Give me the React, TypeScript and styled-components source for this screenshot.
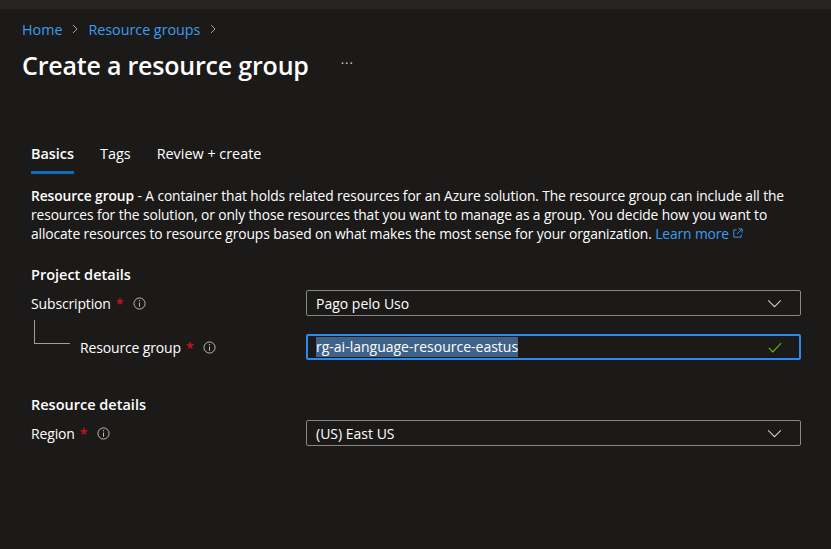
import React from 'react';
import styled, { createGlobalStyle } from 'styled-components';

const GlobalStyle = createGlobalStyle`
  html, body {
    margin: 0;
    padding: 0;
    background: #1b1a19;
  }
  body {
    font-family: "Open Sans", "Noto Sans", sans-serif;
    color: #ffffff;
    -webkit-font-smoothing: antialiased;
  }
`;

const Page = styled.div`
  width: 831px;
  height: 549px;
  background: #1b1a19;
  overflow: hidden;
`;

const TopBand = styled.div`
  height: 9px;
  background: #252423;
`;

const Header = styled.header`
  padding: 10px 22px 0;
`;

const Breadcrumb = styled.nav`
  display: flex;
  align-items: center;
  gap: 9px;
  font-size: 14.3px;
  height: 20px;
`;

const Crumb = styled.a`
  color: #3c9df0;
  text-decoration: none;
`;

const Sep = styled.svg`
  width: 8px;
  height: 10px;
`;

const TitleRow = styled.div`
  display: flex;
  align-items: center;
  margin-top: 9px;
`;

const Title = styled.h1`
  margin: 0;
  font-size: 25px;
  font-weight: 600;
  letter-spacing: -0.2px;
  line-height: 34px;
`;

const More = styled.span`
  margin-left: 32px;
  font-size: 13px;
  letter-spacing: 1px;
  color: #d0d0d0;
  line-height: 10px;
  padding-bottom: 4px;
`;

const Body = styled.main`
  padding: 62px 30px 0 31px;
`;

const Tabs = styled.div`
  display: flex;
  gap: 26px;
`;

const Tab = styled.div<{ $active?: boolean }>`
  font-size: 14.4px;
  font-weight: ${p => (p.$active ? 600 : 400)};
  padding-bottom: 7px;
  border-bottom: 3px solid ${p => (p.$active ? '#0f6cbd' : 'transparent')};
  line-height: 20px;
`;

const Description = styled.p`
  margin: 12px 0 0;
  font-size: 13.8px;
  line-height: 19px;
  width: 758px;
  letter-spacing: -0.1px;
`;

const Bold = styled.b`
  font-weight: 600;
`;

const Link = styled.a`
  color: #3c9df0;
  text-decoration: none;
  white-space: nowrap;
`;

const Section = styled.h2`
  margin: 0;
  font-size: 14.5px;
  font-weight: 600;
  line-height: 20px;
`;

const ProjectSection = styled(Section)`
  margin-top: 22px;
`;

const ResourceSection = styled(Section)`
  margin-top: 35px;
`;

const Form = styled.div`
  display: grid;
  grid-template-columns: 275px 495px;
  row-gap: 18px;
  margin-top: 5px;
`;

const LabelCell = styled.div`
  display: flex;
  align-items: center;
  font-size: 14px;
  height: 26px;
  letter-spacing: -0.15px;
`;

const Connector = styled.span`
  align-self: flex-start;
  width: 36px;
  height: 24px;
  margin: -14px 10px 0 3px;
  border-left: 1px solid #a19f9d;
  border-bottom: 1px solid #a19f9d;
  box-sizing: border-box;
`;

const Star = styled.span`
  color: #e81123;
  margin-left: 5px;
`;

const InfoSvg = styled.svg`
  width: 13px;
  height: 13px;
  margin-left: 10px;
`;

const InfoIcon = () => (
  <InfoSvg viewBox="0 0 14 14">
    <circle cx="7" cy="7" r="6" fill="none" stroke="#c8c6c4" strokeWidth="1" />
    <line x1="7" y1="6" x2="7" y2="10.5" stroke="#c8c6c4" strokeWidth="1" />
    <circle cx="7" cy="4" r="0.7" fill="#c8c6c4" />
  </InfoSvg>
);

const Control = styled.div<{ $focused?: boolean }>`
  display: flex;
  align-items: center;
  justify-content: space-between;
  height: 26px;
  box-sizing: border-box;
  border: ${p => (p.$focused ? '2px solid #2a8af0' : '1px solid #8a8886')};
  border-radius: 2px;
  padding: 0 ${p => (p.$focused ? '17px' : '18px')} 0 ${p => (p.$focused ? '8px' : '9px')};
  font-size: 14px;
`;

const Selected = styled.span`
  background: #3f6388;
  color: #ffffff;
  line-height: 20px;
`;

const ChevronSvg = styled.svg`
  width: 15px;
  height: 9px;
`;

const Chevron = () => (
  <ChevronSvg viewBox="0 0 16 10">
    <polyline points="1,1.5 8,8.5 15,1.5" fill="none" stroke="#d2d0ce" strokeWidth="1.2" />
  </ChevronSvg>
);

const CheckSvg = styled.svg`
  width: 14px;
  height: 11px;
`;

const Check = () => (
  <CheckSvg viewBox="0 0 16 12">
    <polyline points="1,6.5 5.5,11 15,1" fill="none" stroke="#6bb700" strokeWidth="1.3" />
  </CheckSvg>
);

const Arrow = () => (
  <Sep viewBox="0 0 8 10">
    <polyline points="2,1 6,5 2,9" fill="none" stroke="#a19f9d" strokeWidth="1" />
  </Sep>
);

export default function App() {
  return (
    <Page>
      <GlobalStyle />
      <TopBand />
      <Header>
        <Breadcrumb>
          <Crumb>Home</Crumb>
          <Arrow />
          <Crumb>Resource groups</Crumb>
          <Arrow />
        </Breadcrumb>
        <TitleRow>
          <Title>Create a resource group</Title>
          <More>···</More>
        </TitleRow>
      </Header>
      <Body>
        <Tabs>
          <Tab $active>Basics</Tab>
          <Tab>Tags</Tab>
          <Tab>Review + create</Tab>
        </Tabs>
        <Description>
          <Bold>Resource group</Bold> - A container that holds related resources for an Azure solution. The resource
          group can include all the resources for the solution, or only those resources that you want to manage as a
          group. You decide how you want to allocate resources to resource groups based on what makes the most sense for
          your organization.{' '}
          <Link>
            Learn more{' '}
            <svg width="11" height="11" viewBox="0 0 12 12">
              <path d="M5 2H2v8h8V7" fill="none" stroke="#3c9df0" strokeWidth="1" />
              <path d="M7 1h4v4M11 1L5.5 6.5" fill="none" stroke="#3c9df0" strokeWidth="1" />
            </svg>
          </Link>
        </Description>

        <ProjectSection>Project details</ProjectSection>
        <Form>
          <LabelCell>
            Subscription<Star>*</Star>
            <InfoIcon />
          </LabelCell>
          <Control>
            <span>Pago pelo Uso</span>
            <Chevron />
          </Control>
          <LabelCell>
            <Connector />
            Resource group<Star>*</Star>
            <InfoIcon />
          </LabelCell>
          <Control $focused>
            <Selected>rg-ai-language-resource-eastus</Selected>
            <Check />
          </Control>
        </Form>

        <ResourceSection>Resource details</ResourceSection>
        <Form>
          <LabelCell>
            Region<Star>*</Star>
            <InfoIcon />
          </LabelCell>
          <Control>
            <span>(US) East US</span>
            <Chevron />
          </Control>
        </Form>
      </Body>
    </Page>
  );
}
